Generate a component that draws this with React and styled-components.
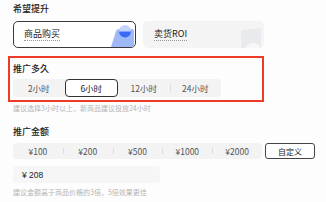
import React from "react";
import styled, { createGlobalStyle } from "styled-components";

const Global = createGlobalStyle`
  html, body { margin: 0; padding: 0; background: #fdfdfd; }
  body { font-family: "Noto Sans CJK SC", "Noto Sans", sans-serif; }
`;

const Page = styled.div`
  width: 326px;
  height: 202px;
  box-sizing: border-box;
  padding: 3px 0 0 13px;
  display: flex;
  flex-direction: column;
  overflow: hidden;
`;

const Title = styled.div`
  font-size: 9px;
  line-height: 12px;
  color: #222;
  font-weight: 500;
  margin-top: ${(p) => p.$mt || 0}px;
`;

const CardRow = styled.div`
  display: flex;
  gap: 7px;
  margin-top: 6px;
`;

const Card = styled.div`
  position: relative;
  width: ${(p) => (p.$active ? 123 : 121)}px;
  height: 27px;
  box-sizing: border-box;
  border-radius: 5px;
  border: ${(p) => (p.$active ? "1px solid #3a3a3a" : "none")};
  background: ${(p) => (p.$active ? "#fff" : "#f4f4f5")};
  display: flex;
  align-items: center;
  padding-left: ${(p) => (p.$active ? 10 : 11)}px;
  overflow: hidden;
`;

const CardText = styled.span`
  font-size: 9px;
  line-height: 12px;
  color: #222;
  border-bottom: 1px dotted #999;
`;

const Deco = styled.svg`
  position: absolute;
  right: 1px;
  bottom: 0;
`;

const Highlight = styled.div`
  margin: 8px 0 0 -5px;
  width: 256px;
  height: 46px;
  box-sizing: border-box;
  border: 2px solid #ef3b25;
  padding: 5px 0 0 3px;
  display: flex;
  flex-direction: column;
`;

const Segmented = styled.div`
  display: flex;
  align-items: center;
  background: #f3f3f4;
  border-radius: 4px;
  height: ${(p) => p.$h}px;
  width: ${(p) => p.$w}px;
  margin-top: ${(p) => p.$mt || 0}px;
`;

const Seg = styled.div`
  position: relative;
  flex: 1;
  height: 100%;
  box-sizing: border-box;
  display: flex;
  align-items: center;
  justify-content: center;
  font-size: 8.5px;
  color: ${(p) => (p.$active ? "#222" : "#555")};
  background: ${(p) => (p.$active ? "#fff" : "transparent")};
  border: ${(p) => (p.$active ? "1px solid #333" : "none")};
  border-radius: 4px;
  &::before {
    content: "";
    display: ${(p) => (p.$divider ? "block" : "none")};
    position: absolute;
    left: 0;
    top: 5px;
    bottom: 5px;
    width: 1px;
    background: #dcdcdc;
  }
`;

const Hint = styled.div`
  font-size: 7px;
  line-height: 10px;
  color: #b5b5b5;
  margin-top: ${(p) => p.$mt || 0}px;
`;

const AmountRow = styled.div`
  display: flex;
  align-items: center;
  gap: 3px;
  margin-top: 5px;
`;

const CustomBtn = styled.div`
  width: 50px;
  height: 16px;
  box-sizing: border-box;
  border: 1px solid #444;
  border-radius: 3px;
  background: #fff;
  font-size: 8px;
  color: #222;
  display: flex;
  align-items: center;
  justify-content: center;
`;

const Input = styled.div`
  margin-top: 7px;
  width: 147px;
  height: 17px;
  box-sizing: border-box;
  border-radius: 4px;
  background: #f6f6f7;
  display: flex;
  align-items: center;
  padding-left: 9px;
  font-size: 8.5px;
  color: #222;
  font-family: "Liberation Sans", "Noto Sans CJK SC", sans-serif;
`;

const durations = ["2小时", "6小时", "12小时", "24小时"];
const amounts = ["¥100", "¥200", "¥500", "¥1000", "¥2000"];

export default function App() {
  return (
    <Page>
      <Global />
      <Title>希望提升</Title>
      <CardRow>
        <Card $active>
          <CardText>商品购买</CardText>
          <Deco width="24" height="23" viewBox="0 0 24 23">
            <path d="M6 7 Q7 5 9 5 L22 5 Q24 5 24 7 L24 23 L1 23 Z" fill="#9fb8f7" />
            <circle cx="15" cy="7" r="6" fill="#c2d4fd" />
            <path d="M9 7.5 A6 6 0 0 0 21 7.5 Z" fill="#3c6af5" />
          </Deco>
        </Card>
        <Card>
          <CardText>卖货ROI</CardText>
          <Deco width="24" height="20" viewBox="0 0 24 20">
            <path d="M2 4 Q2 2 4 2 L22 0 L22 20 L2 20 Z" fill="#e9eaed" />
            <path d="M7 20 A7 5 0 0 1 21 20 Z" fill="#f7f7f8" />
          </Deco>
        </Card>
      </CardRow>
      <Highlight>
        <Title>推广多久</Title>
        <Segmented $h={18} $w={208} $mt={4}>
          {durations.map((d, i) => (
            <Seg key={d} $active={i === 1} $divider={i === 3}>
              {d}
            </Seg>
          ))}
        </Segmented>
      </Highlight>
      <Hint $mt={1}>建议选择3小时以上，新商品建议投放24小时</Hint>
      <Title $mt={13}>推广金额</Title>
      <AmountRow>
        <Segmented $h={16} $w={249}>
          {amounts.map((a, i) => (
            <Seg key={a} $divider={i > 0}>
              {a}
            </Seg>
          ))}
        </Segmented>
        <CustomBtn>自定义</CustomBtn>
      </AmountRow>
      <Input>¥ 208</Input>
      <Hint $mt={4}>建议金额高于商品价格的3倍，5倍效果更佳</Hint>
    </Page>
  );
}
